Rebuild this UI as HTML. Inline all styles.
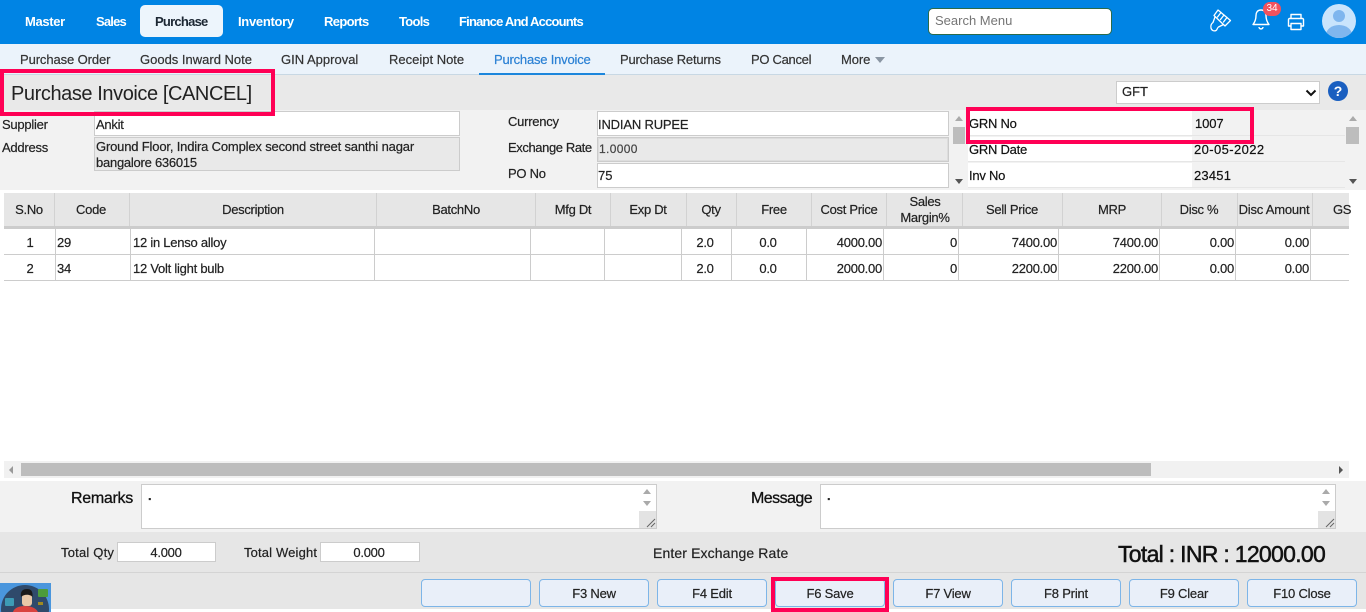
<!DOCTYPE html>
<html><head><meta charset="utf-8"><title>Purchase Invoice</title>
<style>
html,body{margin:0;padding:0;width:1366px;height:612px;overflow:hidden;background:#fff}
body{position:relative;font-family:"Liberation Sans",sans-serif;font-size:13px;color:#222}
.b{position:absolute;box-sizing:border-box}
.t{position:absolute;white-space:nowrap;line-height:16px;letter-spacing:-.25px;-webkit-text-stroke:.2px currentColor}
.c{transform:translateX(-50%)}
.r{transform:translateX(-100%)}
.n{color:#fff;font-weight:bold;font-size:13px;letter-spacing:-.55px;top:14px;-webkit-text-stroke:0}
.s{top:52px;color:#333;letter-spacing:-.1px}
.h{top:202px;font-size:13px;color:#222;letter-spacing:-.3px}
.btn{position:absolute;top:579px;width:110px;height:28px;box-sizing:border-box;background:#e9eff9;border:1px solid #7db5e8;border-radius:4px;text-align:center;line-height:27px;font-size:13px;letter-spacing:-.2px;color:#222;-webkit-text-stroke:.2px currentColor}
.red{position:absolute;box-sizing:border-box;border:4px solid #ff0055}
.v{position:absolute;width:1px;background:#ccc}
.g{position:absolute;height:1px;background:#ccc}
</style></head><body>

<div class="b" style="left:0;top:0;width:1366px;height:44px;background:#0084e4"></div>
<div class="b" style="left:140px;top:5px;width:83px;height:32px;background:#edf5fc;border-radius:5px"></div>
<div class="t n" style="left:25px;letter-spacing:-.35px">Master</div>
<div class="t n" style="left:96px;letter-spacing:-.8px">Sales</div>
<div class="t n" style="left:155px;color:#1c2733;letter-spacing:-.75px">Purchase</div>
<div class="t n" style="left:238px;letter-spacing:-.3px">Inventory</div>
<div class="t n" style="left:324px;letter-spacing:-.65px">Reports</div>
<div class="t n" style="left:399px;letter-spacing:-.7px">Tools</div>
<div class="t n" style="left:459px;letter-spacing:-.8px">Finance And Accounts</div>

<div class="b" style="left:928px;top:8px;width:184px;height:27px;background:#fff;border:1px solid #2a6a4a;border-radius:5px"></div>
<div class="t" style="left:935px;top:13px;color:#757575;font-size:13px;letter-spacing:0;-webkit-text-stroke:0">Search Menu</div>

<svg class="b" style="left:1208px;top:8px" width="24" height="26" viewBox="0 0 24 26" fill="none" stroke="#fff" stroke-width="1.3" stroke-linejoin="round" stroke-linecap="round"><path d="M10 2L22.500 12.500 17 18 6 7.500z"/><path d="M13 4.500L9.500 9M16 7l-3.500 4.500M19 9.500L15.500 14"/><path d="M7 9L5 14.500c-1.500 1-2.500 3-2 5.500s3 3.500 5 2.500c1.500-.8 1-2.500 2.500-3.500L15.500 16.500"/></svg>
<svg class="b" style="left:1252px;top:8px" width="18" height="24" viewBox="0 0 18 24" fill="none" stroke="#fff" stroke-width="1.4" stroke-linejoin="round"><path d="M9 2c-3.500 0-5 2.500-5 5.500 0 4-1 6.500-3 9h16c-2-2.500-3-5-3-9C14 4.500 12.500 2 9 2z"/><path d="M7 19c0 2.500 4 2.500 4 0"/></svg>
<div class="b" style="left:1263px;top:2px;width:18px;height:14px;background:#f0525f;border-radius:7px;color:#fff;font-size:10px;line-height:14px;text-align:center">34</div>
<svg class="b" style="left:1287px;top:13px" width="18" height="18" viewBox="0 0 18 18" fill="none" stroke="#fff" stroke-width="1.4" stroke-linejoin="round"><path d="M4 6V1.500h10V6"/><path d="M4 13H1.500V6.500c0-.5.500-1 1-1h13c.5 0 1 .5 1 1V13H14"/><path d="M4 10.500h10v6H4z"/></svg>
<svg class="b" style="left:1322px;top:4px" width="34" height="34" viewBox="0 0 34 34"><defs><clipPath id="ac"><circle cx="17" cy="17" r="17"/></clipPath></defs><circle cx="17" cy="17" r="17" fill="#c9e4fc"/><g clip-path="url(#ac)"><circle cx="17" cy="12" r="6" fill="#7fb6ee"/><ellipse cx="17" cy="31" rx="13" ry="10" fill="#7fb6ee"/></g></svg>

<div class="b" style="left:0;top:44px;width:1366px;height:31px;background:#ebf3fb;border-bottom:1px solid #c8d8e4"></div>
<div class="t s" style="left:20px">Purchase Order</div>
<div class="t s" style="left:140px;letter-spacing:0">Goods Inward Note</div>
<div class="t s" style="left:281px;letter-spacing:0">GIN Approval</div>
<div class="t s" style="left:389px;letter-spacing:0">Receipt Note</div>
<div class="t s" style="left:494px;color:#2a80d4;letter-spacing:-.2px">Purchase Invoice</div>
<div class="t s" style="left:620px;letter-spacing:-.2px">Purchase Returns</div>
<div class="t s" style="left:751px;letter-spacing:-.3px">PO Cancel</div>
<div class="t s" style="left:841px">More</div>
<div class="b" style="left:875px;top:57px;width:0;height:0;border:5px solid transparent;border-top:6px solid #8a96a3;border-bottom:0"></div>
<div class="b" style="left:479px;top:73px;width:126px;height:2px;background:#1c86dc"></div>

<div class="b" style="left:0;top:75px;width:1366px;height:35px;background:#e9e9e9"></div>
<div class="t" style="left:11px;top:81px;font-size:20px;line-height:26px;letter-spacing:-.42px;color:#222;-webkit-text-stroke:0">Purchase Invoice [CANCEL]</div>
<div class="b" style="left:1116px;top:81px;width:204px;height:23px;background:#fff;border:1px solid #ccc"></div>
<div class="t" style="left:1122px;top:84px;letter-spacing:0">GFT</div>
<svg class="b" style="left:1305px;top:89px" width="12" height="8" viewBox="0 0 12 8" fill="none" stroke="#111" stroke-width="2"><path d="M1.500 1.500L6 6l4.500-4.500"/></svg>
<div class="b" style="left:1328px;top:81px;width:20px;height:20px;border-radius:50%;background:#1a5fc0;color:#fff;font-weight:bold;font-size:14px;line-height:20px;text-align:center">?</div>

<div class="b" style="left:0;top:110px;width:1366px;height:80px;background:#f2f2f2"></div>
<div class="t" style="left:2px;top:117px">Supplier</div>
<div class="t" style="left:2px;top:140px">Address</div>
<div class="b" style="left:94px;top:111px;width:366px;height:25px;background:#fff;border:1px solid #ccc"></div>
<div class="t" style="left:96px;top:117px">Ankit</div>
<div class="b" style="left:94px;top:137px;width:366px;height:34px;background:#e9e9e9;border:1px solid #ccc"></div>
<div class="t" style="left:96px;top:139px;letter-spacing:-.17px">Ground Floor, Indira Complex second street santhi nagar</div>
<div class="t" style="left:96px;top:155px">bangalore 636015</div>

<div class="t" style="left:508px;top:114px">Currency</div>
<div class="t" style="left:508px;top:140px;letter-spacing:-.4px">Exchange Rate</div>
<div class="t" style="left:508px;top:166px">PO No</div>
<div class="b" style="left:597px;top:111px;width:352px;height:25px;background:#fff;border:1px solid #ccc"></div>
<div class="t" style="left:598px;top:117px;letter-spacing:-.17px">INDIAN RUPEE</div>
<div class="b" style="left:597px;top:137px;width:352px;height:25px;background:#e9e9e9;border:1px solid #ccc;outline:1px solid #ddd;outline-offset:-2px"></div>
<div class="t" style="left:599px;top:141px;letter-spacing:.35px;color:#444;font-size:12px">1.0000</div>
<div class="b" style="left:597px;top:163px;width:352px;height:25px;background:#fff;border:1px solid #ccc"></div>
<div class="t" style="left:598px;top:168px;letter-spacing:0">75</div>

<div class="b" style="left:952px;top:111px;width:13px;height:78px;background:#f2f2f2"></div>
<div class="b" style="left:953px;top:127px;width:12px;height:17px;background:#bdbdbd"></div>
<div class="b" style="left:955px;top:116px;border:4px solid transparent;border-bottom:5px solid #aaa;border-top:0"></div>
<div class="b" style="left:955px;top:179px;border:4px solid transparent;border-top:5px solid #555;border-bottom:0"></div>

<div class="b" style="left:968px;top:111px;width:224px;height:24px;background:#fff"></div>
<div class="b" style="left:968px;top:137px;width:224px;height:24px;background:#fff"></div>
<div class="b" style="left:968px;top:163px;width:224px;height:24px;background:#fff"></div>
<div class="g" style="left:968px;top:135px;width:377px;background:#e6e6e6"></div>
<div class="g" style="left:968px;top:161px;width:377px;background:#e6e6e6"></div>
<div class="g" style="left:968px;top:187px;width:377px;background:#e6e6e6"></div>
<div class="t" style="left:969px;top:116px;color:#111">GRN No</div>
<div class="t" style="left:1195px;top:116px;color:#111;letter-spacing:-.1px">1007</div>
<div class="t" style="left:969px;top:142px;color:#111">GRN Date</div>
<div class="t" style="left:1194px;top:142px;color:#111;letter-spacing:.4px">20-05-2022</div>
<div class="t" style="left:969px;top:168px;color:#111">Inv No</div>
<div class="t" style="left:1194px;top:168px;color:#111;letter-spacing:.2px">23451</div>
<div class="b" style="left:1346px;top:127px;width:13px;height:17px;background:#bdbdbd"></div>
<div class="b" style="left:1349px;top:116px;border:4px solid transparent;border-bottom:5px solid #aaa;border-top:0"></div>
<div class="b" style="left:1349px;top:179px;border:4px solid transparent;border-top:5px solid #555;border-bottom:0"></div>

<!-- table header -->
<div class="b" style="left:4px;top:193px;width:1345px;height:33px;background:#e6e6e6"></div>
<div class="b" style="left:4px;top:226px;width:1345px;height:3px;background:#ccc"></div>
<div class="v" style="left:54px;top:193px;height:33px;background:#d2d2d2"></div>
<div class="v" style="left:129px;top:193px;height:33px;background:#d2d2d2"></div>
<div class="v" style="left:376px;top:193px;height:33px;background:#d2d2d2"></div>
<div class="v" style="left:535px;top:193px;height:33px;background:#d2d2d2"></div>
<div class="v" style="left:610px;top:193px;height:33px;background:#d2d2d2"></div>
<div class="v" style="left:686px;top:193px;height:33px;background:#d2d2d2"></div>
<div class="v" style="left:736px;top:193px;height:33px;background:#d2d2d2"></div>
<div class="v" style="left:811px;top:193px;height:33px;background:#d2d2d2"></div>
<div class="v" style="left:886px;top:193px;height:33px;background:#d2d2d2"></div>
<div class="v" style="left:962px;top:193px;height:33px;background:#d2d2d2"></div>
<div class="v" style="left:1062px;top:193px;height:33px;background:#d2d2d2"></div>
<div class="v" style="left:1161px;top:193px;height:33px;background:#d2d2d2"></div>
<div class="v" style="left:1237px;top:193px;height:33px;background:#d2d2d2"></div>
<div class="v" style="left:1312px;top:193px;height:33px;background:#d2d2d2"></div>
<div class="t h c" style="left:29px">S.No</div>
<div class="t h c" style="left:91px">Code</div>
<div class="t h c" style="left:253px">Description</div>
<div class="t h c" style="left:456px">BatchNo</div>
<div class="t h c" style="left:573px">Mfg Dt</div>
<div class="t h c" style="left:648px">Exp Dt</div>
<div class="t h c" style="left:711px">Qty</div>
<div class="t h c" style="left:774px">Free</div>
<div class="t h c" style="left:849px">Cost Price</div>
<div class="t h c" style="left:925px;top:194px">Sales</div>
<div class="t h c" style="left:925px;top:210px">Margin%</div>
<div class="t h c" style="left:1012px">Sell Price</div>
<div class="t h c" style="left:1112px">MRP</div>
<div class="t h c" style="left:1199px">Disc %</div>
<div class="t h c" style="left:1274px;letter-spacing:-.2px">Disc Amount</div>
<div class="t h" style="left:1333px">GS</div>

<!-- table body -->
<div class="g" style="left:4px;top:254px;width:1345px"></div>
<div class="g" style="left:4px;top:280px;width:1345px"></div>
<div class="v" style="left:55px;top:229px;height:52px"></div>
<div class="v" style="left:130px;top:229px;height:52px"></div>
<div class="v" style="left:374px;top:229px;height:52px"></div>
<div class="v" style="left:530px;top:229px;height:52px"></div>
<div class="v" style="left:604px;top:229px;height:52px"></div>
<div class="v" style="left:681px;top:229px;height:52px"></div>
<div class="v" style="left:731px;top:229px;height:52px"></div>
<div class="v" style="left:806px;top:229px;height:52px"></div>
<div class="v" style="left:883px;top:229px;height:52px"></div>
<div class="v" style="left:958px;top:229px;height:52px"></div>
<div class="v" style="left:1058px;top:229px;height:52px"></div>
<div class="v" style="left:1159px;top:229px;height:52px"></div>
<div class="v" style="left:1235px;top:229px;height:52px"></div>
<div class="v" style="left:1310px;top:229px;height:52px"></div>

<div class="t c" style="left:30px;top:235px">1</div>
<div class="t" style="left:57px;top:235px">29</div>
<div class="t" style="left:133px;top:235px">12 in Lenso alloy</div>
<div class="t c" style="left:705px;top:235px">2.0</div>
<div class="t c" style="left:768px;top:235px">0.0</div>
<div class="t r" style="left:882px;top:235px">4000.00</div>
<div class="t r" style="left:957px;top:235px">0</div>
<div class="t r" style="left:1057px;top:235px">7400.00</div>
<div class="t r" style="left:1158px;top:235px">7400.00</div>
<div class="t r" style="left:1234px;top:235px">0.00</div>
<div class="t r" style="left:1309px;top:235px">0.00</div>

<div class="t c" style="left:30px;top:261px">2</div>
<div class="t" style="left:57px;top:261px">34</div>
<div class="t" style="left:133px;top:261px">12 Volt light bulb</div>
<div class="t c" style="left:705px;top:261px">2.0</div>
<div class="t c" style="left:768px;top:261px">0.0</div>
<div class="t r" style="left:882px;top:261px">2000.00</div>
<div class="t r" style="left:957px;top:261px">0</div>
<div class="t r" style="left:1057px;top:261px">2200.00</div>
<div class="t r" style="left:1158px;top:261px">2200.00</div>
<div class="t r" style="left:1234px;top:261px">0.00</div>
<div class="t r" style="left:1309px;top:261px">0.00</div>

<!-- horizontal scrollbar -->
<div class="b" style="left:4px;top:461px;width:1345px;height:17px;background:#f1f1f1"></div>
<div class="b" style="left:21px;top:463px;width:1130px;height:13px;background:#bdbdbd"></div>
<div class="b" style="left:9px;top:466px;border:4px solid transparent;border-right:4px solid #999;border-left:0"></div>
<div class="b" style="left:1339px;top:466px;border:4px solid transparent;border-left:4px solid #555;border-right:0"></div>

<!-- remarks -->
<div class="b" style="left:0;top:481px;width:1366px;height:51px;background:#f2f2f2"></div>
<div class="t" style="left:71px;top:490px;font-size:16px;line-height:18px;color:#111;letter-spacing:-.3px;-webkit-text-stroke:.3px #111">Remarks</div>
<div class="b" style="left:141px;top:484px;width:516px;height:45px;background:#fff;border:1px solid #ccc"></div>
<div class="t" style="left:148px;top:488px;font-weight:bold">.</div>
<div class="b" style="left:639px;top:485px;width:17px;height:43px;background:#f1f1f1"></div>
<div class="b" style="left:639px;top:485px;width:17px;height:28px;background:#fff"></div>
<div class="b" style="left:643px;top:489px;border:4px solid transparent;border-bottom:5px solid #aaa;border-top:0"></div>
<div class="b" style="left:643px;top:501px;border:4px solid transparent;border-top:5px solid #aaa;border-bottom:0"></div>
<div class="b" style="left:639px;top:511px;width:17px;height:17px;background:#e3e3e3"></div>
<svg class="b" style="left:646px;top:518px" width="10" height="10" viewBox="0 0 10 10" stroke="#666" stroke-width="1"><path d="M1 9l8-8M5 9l4-4"/></svg>

<div class="t" style="left:751px;top:490px;font-size:16px;line-height:18px;color:#111;letter-spacing:-.55px;-webkit-text-stroke:.3px #111">Message</div>
<div class="b" style="left:820px;top:484px;width:516px;height:45px;background:#fff;border:1px solid #ccc"></div>
<div class="t" style="left:827px;top:488px;font-weight:bold">.</div>
<div class="b" style="left:1318px;top:485px;width:17px;height:28px;background:#fff"></div>
<div class="b" style="left:1322px;top:489px;border:4px solid transparent;border-bottom:5px solid #aaa;border-top:0"></div>
<div class="b" style="left:1322px;top:501px;border:4px solid transparent;border-top:5px solid #aaa;border-bottom:0"></div>
<div class="b" style="left:1318px;top:511px;width:17px;height:17px;background:#e3e3e3"></div>
<svg class="b" style="left:1325px;top:518px" width="10" height="10" viewBox="0 0 10 10" stroke="#666" stroke-width="1"><path d="M1 9l8-8M5 9l4-4"/></svg>

<!-- totals -->
<div class="b" style="left:0;top:532px;width:1366px;height:77px;background:#e6e6e6"></div>
<div class="b" style="left:0;top:572px;width:1366px;height:1px;background:#d4d4d4"></div>
<div class="t" style="left:61px;top:545px;letter-spacing:.2px">Total Qty</div>
<div class="b" style="left:117px;top:542px;width:99px;height:20px;background:#fff;border:1px solid #ccc"></div>
<div class="t c" style="left:166px;top:545px">4.000</div>
<div class="t" style="left:244px;top:545px;letter-spacing:.15px">Total Weight</div>
<div class="b" style="left:320px;top:542px;width:100px;height:20px;background:#fff;border:1px solid #ccc"></div>
<div class="t c" style="left:369px;top:545px">0.000</div>
<div class="t" style="left:653px;top:545px;font-size:14px;letter-spacing:.12px">Enter Exchange Rate</div>
<div class="t" style="left:1118px;top:540px;font-size:23px;line-height:28px;letter-spacing:-.7px;color:#111;-webkit-text-stroke:.5px #111">Total : INR : 12000.00</div>

<!-- buttons -->
<div class="btn" style="left:421px"></div>
<div class="btn" style="left:539px">F3 New</div>
<div class="btn" style="left:657px">F4 Edit</div>
<div class="btn" style="left:775px">F6 Save</div>
<div class="btn" style="left:893px">F7 View</div>
<div class="btn" style="left:1011px">F8 Print</div>
<div class="btn" style="left:1129px">F9 Clear</div>
<div class="btn" style="left:1247px">F10 Close</div>

<!-- avatar -->
<svg class="b" style="left:0;top:583px" width="51" height="29" viewBox="0 0 51 29"><rect width="51" height="29" fill="#4a96dd"/><circle cx="25" cy="26" r="24" fill="#2f4a6b"/><path d="M13 29c1-4 6-6 12-6s11 2 13 6z" fill="#d9433f"/><rect x="22" y="11" width="10" height="12" rx="3" fill="#e8c8a8"/><path d="M21 14c-1-6 2-8 6-8s6 2 5.500 8c-2-3-9-3-11.500 0z" fill="#1a1a1a"/><rect x="38" y="6" width="10" height="8" rx="1" fill="#4c9c3c"/><rect x="5" y="15" width="9" height="8" rx="1" fill="#3d9bb5"/><rect x="38" y="19" width="5" height="3" fill="#a08a20"/></svg>

<!-- highlight boxes -->
<div class="red" style="left:0;top:69px;width:275px;height:47px"></div>
<div class="red" style="left:966px;top:107px;width:288px;height:37px"></div>
<div class="red" style="left:771px;top:577px;width:118px;height:35px"></div>
</body></html>
